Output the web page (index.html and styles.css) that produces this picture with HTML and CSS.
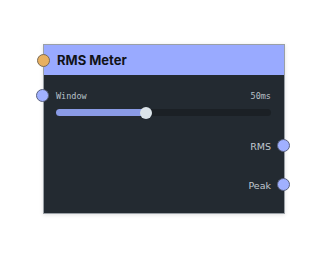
FILE: index.html
```html
<!DOCTYPE html>
<html>
<head><link rel="stylesheet" href="styles.css"></head>
<body>
<div class="canvas">
  <div class="node">
    <div class="header">
      <span class="port port-orange port-left"></span>
      <span class="title">RMS Meter</span>
    </div>
    <div class="body">
      <div class="param">
        <span class="port port-blue port-left"></span>
        <div class="param-row">
          <span class="mono">Window</span>
          <span class="mono">50ms</span>
        </div>
        <div class="slider">
          <div class="fill" style="width:42%"></div>
          <div class="thumb" style="left:42%"></div>
        </div>
      </div>
      <div class="output">
        <span class="out-label">RMS</span>
        <span class="port port-blue port-right"></span>
      </div>
      <div class="output">
        <span class="out-label">Peak</span>
        <span class="port port-blue port-right"></span>
      </div>
    </div>
  </div>
</div>
</body>
</html>
```

FILE: styles.css
```css
html, body { margin: 0; padding: 0; background: #ffffff; }
.canvas { width: 328px; height: 258px; padding: 44px 0 0 43px; box-sizing: border-box; }
.node {
  width: 242px;
  height: 170px;
  background: #232a31;
  border: 1px solid #9aa0a6;
  box-sizing: border-box;
  box-shadow: 0 1px 4px rgba(0,0,0,0.12);
  display: flex;
  flex-direction: column;
}
.header {
  position: relative;
  height: 30px;
  background: #99aaff;
  display: flex;
  align-items: center;
  padding-left: 13px;
}
.title {
  font-family: "Inter", "Liberation Sans", sans-serif;
  font-weight: 700;
  font-size: 13px;
  color: #111318;
}
.port {
  position: absolute;
  width: 13px;
  height: 13px;
  border-radius: 50%;
  border: 1px solid #5a6270;
  box-sizing: border-box;
}
.port-orange { background: #e8b060; border-color: #7a6a55; }
.port-blue { background: #a0b0ff; border-color: #5a6280; }
.port-left { left: -7px; top: 50%; margin-top: -6px; }
.port-right { right: -19px; top: 50%; margin-top: -7px; }
.body { flex: 1; padding: 16px 13px 0 12px; display: flex; flex-direction: column; }
.param { position: relative; }
.param .port-left { left: -20px; top: -2px; margin-top: 0; }
.param-row { display: flex; justify-content: space-between; }
.mono {
  font-family: "DejaVu Sans Mono", monospace;
  font-size: 8.5px;
  color: #b8c0c8;
  line-height: 10px;
}
.slider {
  position: relative;
  margin-top: 8px;
  height: 7px;
  border-radius: 4px;
  background: #1b2025;
}
.fill { height: 100%; border-radius: 4px; background: #8a9be6; }
.thumb {
  position: absolute;
  top: 50%;
  width: 12px; height: 12px;
  margin: -6px 0 0 -6px;
  border-radius: 50%;
  background: #dce4ea;
}
.output {
  position: relative;
  display: flex;
  justify-content: flex-end;
  height: 20px;
  align-items: center;
}
.out-label {
  font-family: "DejaVu Sans", sans-serif;
  font-size: 9.5px;
  color: #c0c8d0;
}
.body .output:nth-child(2) { margin-top: 20px; }
.body .output:nth-child(3) { margin-top: 19px; }
```
